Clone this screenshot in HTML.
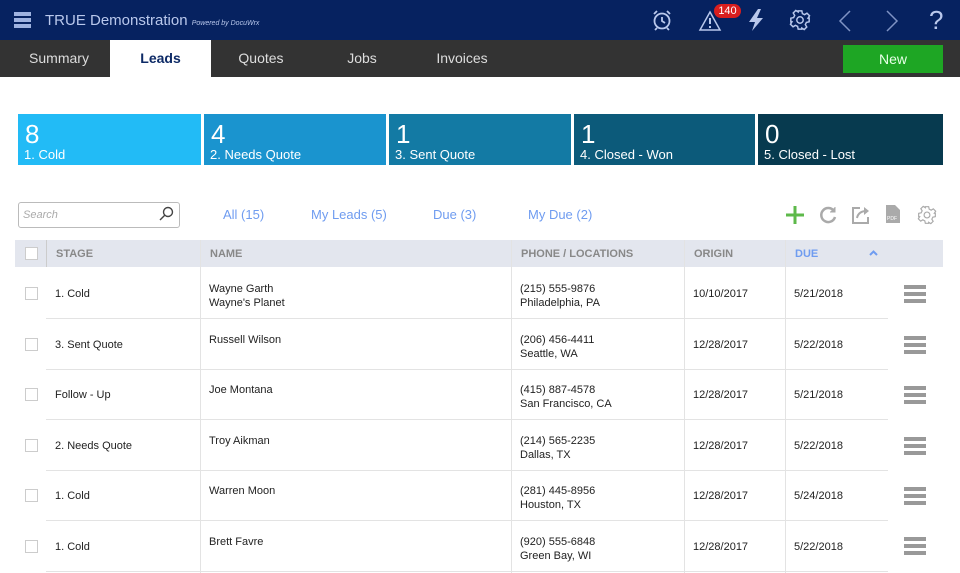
<!DOCTYPE html>
<html><head><meta charset="utf-8"><style>
*{margin:0;padding:0;box-sizing:border-box}
body{width:960px;height:573px;overflow:hidden;background:#fff;font-family:"Liberation Sans",Arial,sans-serif;position:relative}
.abs{position:absolute}
.hdr{left:0;top:0;width:960px;height:40px;background:#062260}
.tabs{left:0;top:40px;width:960px;height:37px;background:#333}
.tab{position:absolute;top:0;height:37px;line-height:37px;color:#ddd;font-size:14px;text-align:center}
.tile{position:absolute;top:114px;height:51px;color:#fff}
.tile .n{position:absolute;left:7px;top:6px;font-size:26px;line-height:28px}
.tile .l{position:absolute;left:6px;top:33px;font-size:13px}
.flt{position:absolute;top:207px;color:#6f9cf0;font-size:13px}
.th{position:absolute;top:241px;height:27px;line-height:27px;font-size:11px;font-weight:bold;color:#888}
.cell{position:absolute;font-size:11px;color:#222;line-height:14px}
.vl{position:absolute;width:1px;background:#e3e3e3}
.hl{position:absolute;left:46px;width:842px;height:1px;background:#e3e3e3}
.cb{position:absolute;left:25px;width:13px;height:13px;border:1px solid #ccc;background:#fff}
.menu{position:absolute;left:904px;width:22px}
.menu i{display:block;height:4px;background:#999;margin-bottom:3px}
</style></head><body>
<div class="abs hdr">
  <div class="abs" style="left:14px;top:12px;width:17px">
    <div style="height:4px;background:#9fb3e0;margin-bottom:2px"></div><div style="height:4px;background:#9fb3e0;margin-bottom:2px"></div><div style="height:4px;background:#9fb3e0"></div></div>
  <div class="abs" style="left:45px;top:12px;color:#b9c8ec;font-size:15px">TRUE Demonstration <span style="font-size:7px;font-style:italic">Powered by DocuWrx</span></div>
  <svg class="abs" style="left:650px;top:8px" width="24" height="24" viewBox="0 0 24 24" fill="none" stroke="#b9c8ec" stroke-width="1.8"><circle cx="12" cy="13" r="7.5"/><path d="M12 9v4l3 2M4 6l3-3M20 6l-3-3M7 20l-2 2M17 20l2 2"/></svg>
  <svg class="abs" style="left:698px;top:10px" width="24" height="22" viewBox="0 0 24 22" fill="none" stroke="#b9c8ec" stroke-width="1.5"><path d="M12 2L22 20H2Z"/><path d="M12 8v6M12 16v2" stroke-width="2"/></svg>
  <div class="abs" style="left:714px;top:4px;width:27px;height:14px;border-radius:7px;background:#d81e1e;color:#fff;font-size:11px;line-height:14px;text-align:center">140</div>
  <svg class="abs" style="left:746px;top:8px" width="20" height="24" viewBox="0 0 20 24" fill="#b9c8ec"><path d="M12 1L3 14h6l-3 9 11-13h-6l4-9z"/></svg>
  <svg class="abs" style="left:789px;top:9px" width="22" height="22" viewBox="0 0 24 24" fill="none" stroke="#b9c8ec" stroke-width="1.6"><circle cx="12" cy="12" r="3.5"/><path d="M10 2h4l.6 3 2.4 1.2 2.6-1.6 2.8 2.8-1.6 2.6L22 10v4l-3 .6-1.2 2.4 1.6 2.6-2.8 2.8-2.6-1.6L14 22h-4l-.6-3-2.4-1.2-2.6 1.6-2.8-2.8 1.6-2.6L2 14v-4l3-.6 1.2-2.4-1.6-2.6 2.8-2.8 2.6 1.6z"/></svg>
  <svg class="abs" style="left:838px;top:9px" width="14" height="24" viewBox="0 0 14 24" fill="none" stroke="#7f93c4" stroke-width="1.5"><path d="M12 2L2 12l10 10"/></svg>
  <svg class="abs" style="left:885px;top:9px" width="14" height="24" viewBox="0 0 14 24" fill="none" stroke="#7f93c4" stroke-width="1.5"><path d="M2 2l10 10L2 22"/></svg>
  <div class="abs" style="left:929px;top:5px;color:#b9c8ec;font-size:26px;line-height:30px">?</div>
</div>
<div class="abs tabs">
  <div class="tab" style="left:18px;width:82px">Summary</div>
  <div class="tab" style="left:110px;width:101px;background:#fff;color:#0d2a66;font-weight:bold">Leads</div>
  <div class="tab" style="left:225px;width:72px">Quotes</div>
  <div class="tab" style="left:330px;width:64px">Jobs</div>
  <div class="tab" style="left:430px;width:64px">Invoices</div>
  <div class="abs" style="left:843px;top:5px;width:100px;height:28px;background:#1ea624;color:#e8ffe8;font-size:14px;line-height:28px;text-align:center">New</div>
</div>
<div class="tile" style="left:18px;width:183px;background:#22bbf6"><div class="n">8</div><div class="l">1. Cold</div></div>
<div class="tile" style="left:204px;width:182px;background:#1a94cf"><div class="n">4</div><div class="l">2. Needs Quote</div></div>
<div class="tile" style="left:389px;width:182px;background:#137aa4"><div class="n">1</div><div class="l">3. Sent Quote</div></div>
<div class="tile" style="left:574px;width:181px;background:#0c5a7a"><div class="n">1</div><div class="l">4. Closed - Won</div></div>
<div class="tile" style="left:758px;width:185px;background:#073a4f"><div class="n">0</div><div class="l">5. Closed - Lost</div></div>

<div class="abs" style="left:18px;top:202px;width:162px;height:26px;border:1px solid #bbb;border-radius:3px"></div>
<div class="abs" style="left:23px;top:209px;font-size:11px;font-style:italic;color:#aaa">Search</div>
<svg class="abs" style="left:158px;top:206px" width="16" height="16" viewBox="0 0 16 16" fill="none" stroke="#444" stroke-width="1.4"><circle cx="10" cy="6" r="4.5"/><path d="M7 9l-5 5"/></svg>
<div class="flt" style="left:223px">All (15)</div>
<div class="flt" style="left:311px">My Leads (5)</div>
<div class="flt" style="left:433px">Due (3)</div>
<div class="flt" style="left:528px">My Due (2)</div>
<svg class="abs" style="left:785px;top:205px" width="20" height="20" viewBox="0 0 20 20" stroke="#5db94a" stroke-width="3"><path d="M10 1v18M1 10h18"/></svg>
<svg class="abs" style="left:818px;top:205px" width="20" height="20" viewBox="0 0 20 20" fill="none" stroke="#aaa" stroke-width="2.5"><path d="M16 6A7 7 0 1 0 17 12"/><path d="M17 2v5h-5" fill="#aaa" stroke-width="1"/></svg>
<svg class="abs" style="left:851px;top:205px" width="20" height="20" viewBox="0 0 20 20" fill="none" stroke="#aaa" stroke-width="2"><path d="M9 3H2v15h15v-6"/><path d="M6 13c1-5 5-7 9-7" /><path d="M13 2l5 4-5 4z" fill="#aaa" stroke="none"/></svg>
<svg class="abs" style="left:885px;top:204px" width="16" height="20" viewBox="0 0 16 20"><path d="M1 1h9l5 5v13H1z" fill="#aaa"/><text x="2" y="16" font-size="5" fill="#fff" font-family="Liberation Sans">PDF</text></svg>
<svg class="abs" style="left:917px;top:205px" width="20" height="20" viewBox="0 0 24 24" fill="none" stroke="#aaa" stroke-width="1.4"><circle cx="12" cy="12" r="3.5"/><path d="M10 2h4l.6 3 2.4 1.2 2.6-1.6 2.8 2.8-1.6 2.6L22 10v4l-3 .6-1.2 2.4 1.6 2.6-2.8 2.8-2.6-1.6L14 22h-4l-.6-3-2.4-1.2-2.6 1.6-2.8-2.8 1.6-2.6L2 14v-4l3-.6 1.2-2.4-1.6-2.6 2.8-2.8 2.6 1.6z"/></svg>

<div class="abs" style="left:15px;top:240px;width:928px;height:27px;background:#e3e6ee"></div>
<div class="cb" style="top:247px"></div>
<div class="th" style="left:56px">STAGE</div>
<div class="th" style="left:210px">NAME</div>
<div class="th" style="left:521px">PHONE / LOCATIONS</div>
<div class="th" style="left:694px">ORIGIN</div>
<div class="th" style="left:795px;color:#6f9cf0">DUE</div>
<svg class="abs" style="left:869px;top:250px" width="9" height="6" viewBox="0 0 9 6" fill="none" stroke="#6f9cf0" stroke-width="2"><path d="M1 5l3.5-3.5L8 5"/></svg>
<div class="vl" style="left:46px;top:240px;height:27px;background:#ccc"></div>
<div class="vl" style="left:200px;top:240px;height:333px"></div>
<div class="vl" style="left:511px;top:240px;height:333px"></div>
<div class="vl" style="left:684px;top:240px;height:333px"></div>
<div class="vl" style="left:785px;top:240px;height:333px"></div>

<div class="hl" style="top:318px"></div><div class="hl" style="top:369px"></div><div class="hl" style="top:419px"></div><div class="hl" style="top:470px"></div><div class="hl" style="top:520px"></div><div class="hl" style="top:571px"></div>

<div class="cb" style="top:287px"></div><div class="cell" style="left:55px;top:287px">1. Cold</div>
<div class="cell" style="left:209px;top:282px">Wayne Garth<br>Wayne's Planet</div>
<div class="cell" style="left:520px;top:282px">(215) 555-9876<br>Philadelphia, PA</div>
<div class="cell" style="left:693px;top:287px">10/10/2017</div><div class="cell" style="left:794px;top:287px">5/21/2018</div>
<div class="menu" style="top:285px"><i></i><i></i><i></i></div>

<div class="cb" style="top:338px"></div><div class="cell" style="left:55px;top:338px">3. Sent Quote</div>
<div class="cell" style="left:209px;top:333px">Russell Wilson</div>
<div class="cell" style="left:520px;top:333px">(206) 456-4411<br>Seattle, WA</div>
<div class="cell" style="left:693px;top:338px">12/28/2017</div><div class="cell" style="left:794px;top:338px">5/22/2018</div>
<div class="menu" style="top:336px"><i></i><i></i><i></i></div>

<div class="cb" style="top:388px"></div><div class="cell" style="left:55px;top:388px">Follow - Up</div>
<div class="cell" style="left:209px;top:383px">Joe Montana</div>
<div class="cell" style="left:520px;top:383px">(415) 887-4578<br>San Francisco, CA</div>
<div class="cell" style="left:693px;top:388px">12/28/2017</div><div class="cell" style="left:794px;top:388px">5/21/2018</div>
<div class="menu" style="top:386px"><i></i><i></i><i></i></div>

<div class="cb" style="top:439px"></div><div class="cell" style="left:55px;top:439px">2. Needs Quote</div>
<div class="cell" style="left:209px;top:434px">Troy Aikman</div>
<div class="cell" style="left:520px;top:434px">(214) 565-2235<br>Dallas, TX</div>
<div class="cell" style="left:693px;top:439px">12/28/2017</div><div class="cell" style="left:794px;top:439px">5/22/2018</div>
<div class="menu" style="top:437px"><i></i><i></i><i></i></div>

<div class="cb" style="top:489px"></div><div class="cell" style="left:55px;top:489px">1. Cold</div>
<div class="cell" style="left:209px;top:484px">Warren Moon</div>
<div class="cell" style="left:520px;top:484px">(281) 445-8956<br>Houston, TX</div>
<div class="cell" style="left:693px;top:489px">12/28/2017</div><div class="cell" style="left:794px;top:489px">5/24/2018</div>
<div class="menu" style="top:487px"><i></i><i></i><i></i></div>

<div class="cb" style="top:540px"></div><div class="cell" style="left:55px;top:540px">1. Cold</div>
<div class="cell" style="left:209px;top:535px">Brett Favre</div>
<div class="cell" style="left:520px;top:535px">(920) 555-6848<br>Green Bay, WI</div>
<div class="cell" style="left:693px;top:540px">12/28/2017</div><div class="cell" style="left:794px;top:540px">5/22/2018</div>
<div class="menu" style="top:537px"><i></i><i></i><i></i></div>
</body></html>
